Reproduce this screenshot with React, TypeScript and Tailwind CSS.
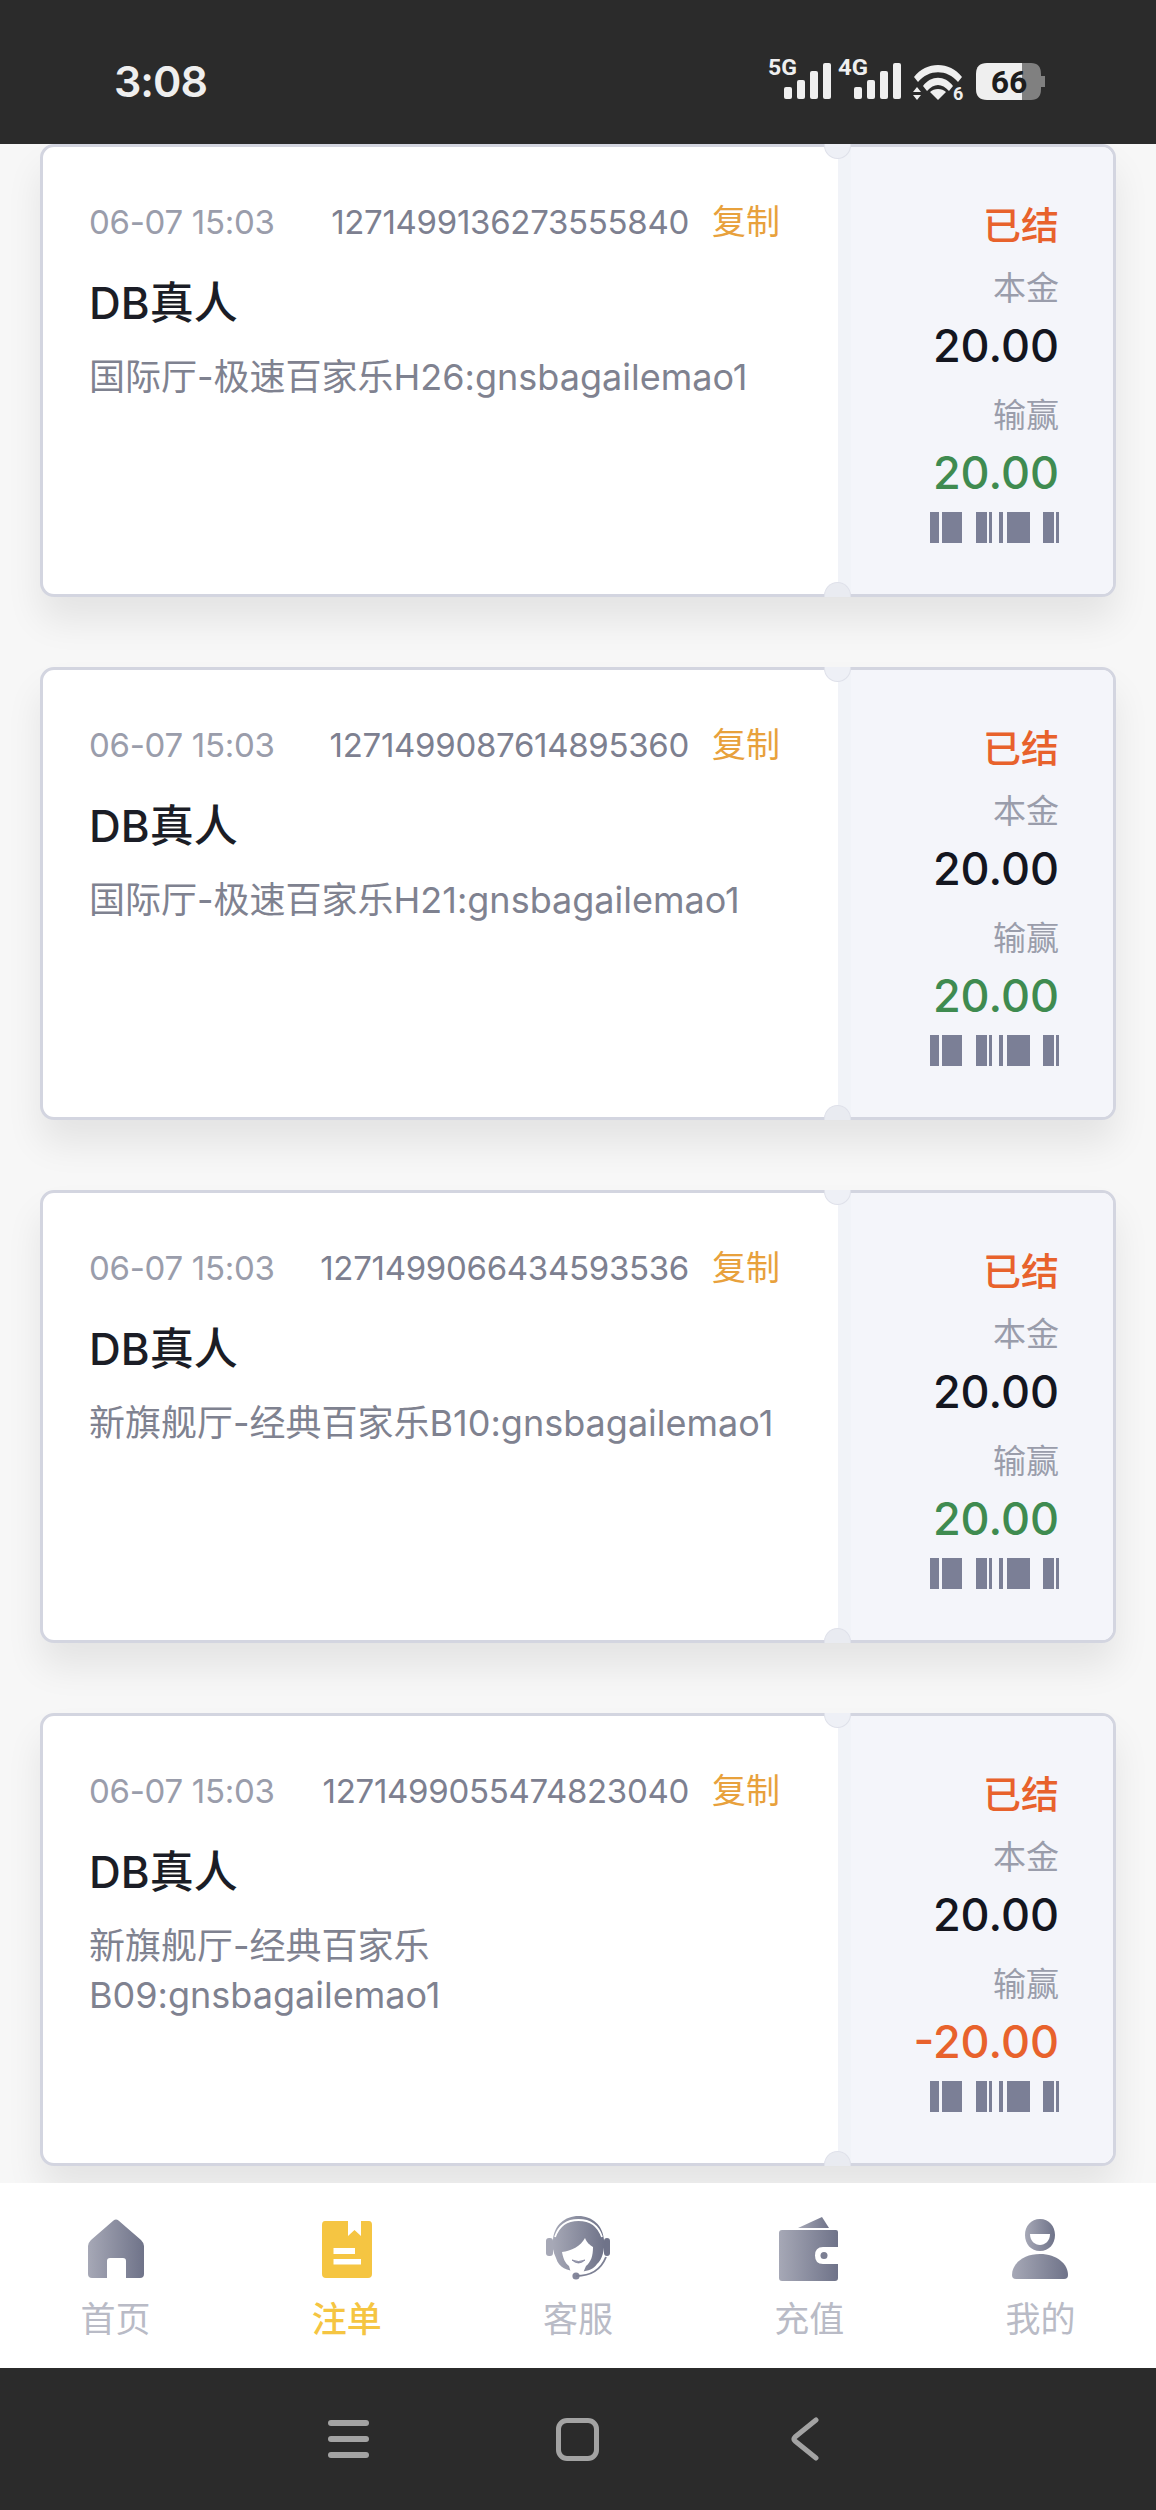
const FONT = "font-['Inter','Noto_Sans_CJK_SC',sans-serif]";

interface Order {
  orderNo: string;
  desc: string;
  win: string;
}

const ORDERS: Order[] = [
  { orderNo: '1271499136273555840', desc: '国际厅-极速百家乐H26:gnsbagailemao1', win: '20.00' },
  { orderNo: '1271499087614895360', desc: '国际厅-极速百家乐H21:gnsbagailemao1', win: '20.00' },
  { orderNo: '1271499066434593536', desc: '新旗舰厅-经典百家乐B10:gnsbagailemao1', win: '20.00' },
  { orderNo: '1271499055474823040', desc: '新旗舰厅-经典百家乐\nB09:gnsbagailemao1', win: '-20.00' },
];

const BARS: [number, number][] = [
  [0, 9], [12, 20], [46, 11], [59, 3], [69, 4], [77, 23], [113, 11], [126, 3],
];

function Barcode() {
  return (
    <svg width="129" height="31" viewBox="0 0 129 31" className="block">
      {BARS.map(([x, w]) => (
        <rect key={x} x={x} y="0" width={w} height="31" fill="#7b7f96" />
      ))}
    </svg>
  );
}

function Card({ order }: { order: Order }) {
  const lost = order.win.startsWith('-');
  return (
    <div className="relative mx-[40px] flex h-[453px] shrink-0 rounded-[14px] border-[3px] border-[#d3d5e0] bg-white shadow-[0_24px_36px_rgba(0,0,0,0.08)]">
      <div className="min-w-0 flex-1 pl-[46px] pr-[58px] pt-[53px]">
        <div className="flex items-center text-[33px] leading-[44px] tracking-[-0.3px]">
          <span className="text-[#9a9dab]">06-07 15:03</span>
          <span className="ml-auto text-[#7d8090]">{order.orderNo}</span>
          <span className="ml-[23px] text-[34px] tracking-normal text-[#e8a13c]">复制</span>
        </div>
        <div className="mt-[33px] text-[44px] font-medium leading-[52px] text-[#1b1d26]">DB真人</div>
        <div className="mt-[24px] whitespace-pre-line text-[36px] leading-[49px] text-[#7f8290]">
          {order.desc}
        </div>
      </div>
      <div className="flex w-[275px] shrink-0 flex-col items-end rounded-r-[11px] border-l-[13px] border-[#f1f3f8] bg-[#f4f5fa] pr-[54px] pt-[54px]">
        <div className="text-[38px] font-medium leading-[48px] text-[#e8622c]">已结</div>
        <div className="mt-[17px] text-[33px] leading-[44px] text-[#9a9dab]">本金</div>
        <div className="mt-[8px] text-[45px] font-medium leading-[56px] text-[#14161f]">20.00</div>
        <div className="mt-[19px] text-[33px] leading-[44px] text-[#9a9dab]">输赢</div>
        <div className={`mt-[8px] text-[45px] font-medium leading-[56px] ${lost ? 'text-[#e8622c]' : 'text-[#3f8b50]'}`}>
          {order.win}
        </div>
        <div className="mt-[11px]">
          <Barcode />
        </div>
      </div>
      <div className="absolute left-[781px] top-[-3px] h-[15px] w-[27px] rounded-b-full border border-t-0 border-[#dfe1ea] bg-[#eef0f6]" />
      <div className="absolute bottom-[-3px] left-[781px] h-[15px] w-[27px] rounded-t-full border border-b-0 border-[#dfe1ea] bg-[#e9ebf1]" />
    </div>
  );
}

function StatusIcons() {
  return (
    <svg width="280" height="60" viewBox="767 51 280 60" className="block">
      <g fill="#efefef" fontFamily="Roboto, sans-serif" fontWeight="700">
        <text x="768" y="75" fontSize="22" textLength="29" lengthAdjust="spacingAndGlyphs">5G</text>
        <rect x="784" y="87" width="8" height="12" rx="2" />
        <rect x="797" y="80" width="8" height="19" rx="2" />
        <rect x="810" y="71" width="8" height="28" rx="2" />
        <rect x="823" y="63" width="8" height="36" rx="2" />
        <text x="838" y="75" fontSize="22" textLength="30" lengthAdjust="spacingAndGlyphs">4G</text>
        <rect x="854" y="87" width="8" height="12" rx="2" />
        <rect x="867" y="80" width="8" height="19" rx="2" />
        <rect x="880" y="71" width="8" height="28" rx="2" />
        <rect x="893" y="63" width="8" height="36" rx="2" />
        <path d="M914 77 C926 61 950 61 962 77 L958 82 C947 69 929 69 918 82 Z" />
        <path d="M923 86 C931 75 945 75 953 86 L949 91 C942 83 934 83 927 91 Z" />
        <path d="M938 100 L930 92 C934 88 942 88 946 92 Z" />
        <path d="M917 87 L921 92 H913 Z M913 95 H921 L917 100 Z" />
        <text x="953" y="100" fontSize="18">6</text>
      </g>
      <path d="M1022 63 H1031 Q1041 63 1041 74 V76 H1045 V87 H1041 V89 Q1041 100 1031 100 H1022 Z" fill="#808080" />
      <path d="M987 63 H1022 V100 H987 Q976 100 976 89 V74 Q976 63 987 63 Z" fill="#efefef" />
      <text x="1009" y="93" textAnchor="middle" fontSize="32" fontWeight="700" fontFamily="Roboto, sans-serif" fill="#1d1d1d">66</text>
    </svg>
  );
}

function Grad({ id }: { id: string }) {
  return (
    <defs>
      <linearGradient id={id} x1="0" y1="0" x2="1" y2="0">
        <stop offset="0" stopColor="#a6a8b6" />
        <stop offset="1" stopColor="#6f7389" />
      </linearGradient>
    </defs>
  );
}

function HomeIcon() {
  return (
    <svg width="66" height="66" viewBox="0 0 66 66">
      <Grad id="g-home" />
      <path
        fill="url(#g-home)"
        d="M30.5 4.6 Q33 2.6 35.5 4.6 L58 24 Q61 27 61 30 V58 Q61 62 57 62 H43 V45 Q43 42 40 42 H27 Q24 42 24 45 V62 H9 Q5 62 5 58 V30 Q5 27 8 24 Z"
      />
    </svg>
  );
}

function OrderIcon() {
  return (
    <svg width="66" height="66" viewBox="0 0 66 66">
      <path
        fill="#f5c542"
        fillRule="evenodd"
        d="M11 5 H34 V20 L40.5 14 L47 20 V5 H55 Q58 5 58 9 V58 Q58 62 54 62 H12 Q8 62 8 58 V9 Q8 5 11 5 Z M19.5 32 V38 H41 V32 Z M19.5 43 V48.5 H47 V43 Z"
      />
    </svg>
  );
}

function ServiceIcon() {
  return (
    <svg width="66" height="66" viewBox="0 0 66 66">
      <Grad id="g-service" />
      <path
        fill="url(#g-service)"
        d="M8 24 C9 9 20 0 33.5 0 C47 0 58 9 59 24 C60 34 57 44 52 48 C48 54 41 56 33 55 C22 55 14 52 11 42 C8 36 7 30 8 24 Z"
      />
      <path d="M10 21 C14 9 23 4 33.5 4 C44 4 53 9 57 21" fill="none" stroke="#fff" strokeWidth="1.8" />
      <path
        fill="#fff"
        d="M17 36 C26 35 36 30 40 22 C42 27 45 29 48 31 C48 40 46 46 41 50 L38 57 H26 L24 50 C20 47 18 42 17 36 Z"
      />
      <path d="M27 44 Q33.5 50 40 44 Q33.5 47 27 44 Z" fill="#80839a" stroke="#80839a" strokeWidth="0.8" />
      <rect x="1" y="22" width="7" height="18" rx="3" fill="#a6a8b6" />
      <rect x="59" y="22" width="6" height="18" rx="3" fill="#6f7389" />
      <circle cx="31" cy="60" r="3.6" fill="#85889c" />
      <path d="M31 60 C43 60 55 56 61 41" fill="none" stroke="#7d8094" strokeWidth="1.9" />
    </svg>
  );
}

function WalletIcon() {
  return (
    <svg width="66" height="66" viewBox="0 0 66 66">
      <Grad id="g-wallet" />
      <path fill="url(#g-wallet)" d="M22 12 L46 1 L53 12 Z" />
      <path
        fill="url(#g-wallet)"
        d="M6 14 H60 Q62 14 62 16 V31 H47 Q39 31 39 39.5 Q39 48 47 48 H62 V62 Q62 65 59 65 H6 Q3 65 3 62 V17 Q3 14 6 14 Z"
      />
      <circle cx="48" cy="39.5" r="3.5" fill="#7c7f93" />
    </svg>
  );
}

function UserIcon() {
  return (
    <svg width="66" height="66" viewBox="0 0 66 66">
      <Grad id="g-user" />
      <path
        fill="url(#g-user)"
        fillRule="evenodd"
        d="M33 3 C42 3 48 10 48 19 C48 28 42 35 33 35 C24 35 18 28 18 19 C18 10 24 3 33 3 Z M23 18 C23 25 28 29 33 29 C38 29 43 25 43 18 Z"
      />
      <path
        fill="url(#g-user)"
        d="M33 38 C50 38 61 48 61 59 Q61 63 57 63 H9 Q5 63 5 59 C5 48 16 38 33 38 Z"
      />
    </svg>
  );
}

const TABS = [
  { label: '首页', icon: <HomeIcon /> },
  { label: '注单', icon: <OrderIcon />, active: true },
  { label: '客服', icon: <ServiceIcon /> },
  { label: '充值', icon: <WalletIcon /> },
  { label: '我的', icon: <UserIcon /> },
];

export default function App() {
  return (
    <div className={`flex h-[2510px] w-[1156px] flex-col overflow-hidden bg-[#f7f7f7] ${FONT}`}>
      <div className="z-10 flex h-[144px] shrink-0 items-center justify-between bg-[#2b2b2b] pl-[114px] pr-[109px] pt-[18px]">
        <span className="text-[43px] font-semibold leading-[54px] tracking-[-1px] text-[#efefef]">3:08</span>
        <StatusIcons />
      </div>

      <div className="flex min-h-0 flex-1 flex-col gap-[70px] overflow-hidden">
        {ORDERS.map((o) => (
          <Card key={o.orderNo} order={o} />
        ))}
      </div>

      <div className="grid h-[185px] shrink-0 grid-cols-5 bg-white pt-[33px]">
        {TABS.map((t) => (
          <div key={t.label} className="flex flex-col items-center">
            {t.icon}
            <span
              className={`mt-[14px] text-[35px] leading-[46px] ${t.active ? 'font-medium text-[#f5c542]' : 'text-[#b9bbc6]'}`}
            >
              {t.label}
            </span>
          </div>
        ))}
      </div>

      <div className="flex h-[142px] shrink-0 items-center gap-[187px] bg-[#2b2b2b] pl-[328px]">
        <div className="flex w-[41px] flex-col gap-[10px]">
          <div className="h-[6px] rounded-full bg-[#a3a3a3]" />
          <div className="h-[6px] rounded-full bg-[#a3a3a3]" />
          <div className="h-[6px] rounded-full bg-[#a3a3a3]" />
        </div>
        <div className="h-[43px] w-[43px] rounded-[11px] border-[5px] border-[#a3a3a3]" />
        <svg width="28" height="44" viewBox="0 0 28 44" fill="none" className="ml-[5px]">
          <path d="M25 3 L4 20 Q2 22 4 24 L25 41" stroke="#a3a3a3" strokeWidth="5" strokeLinecap="round" strokeLinejoin="round" />
        </svg>
      </div>
    </div>
  );
}
